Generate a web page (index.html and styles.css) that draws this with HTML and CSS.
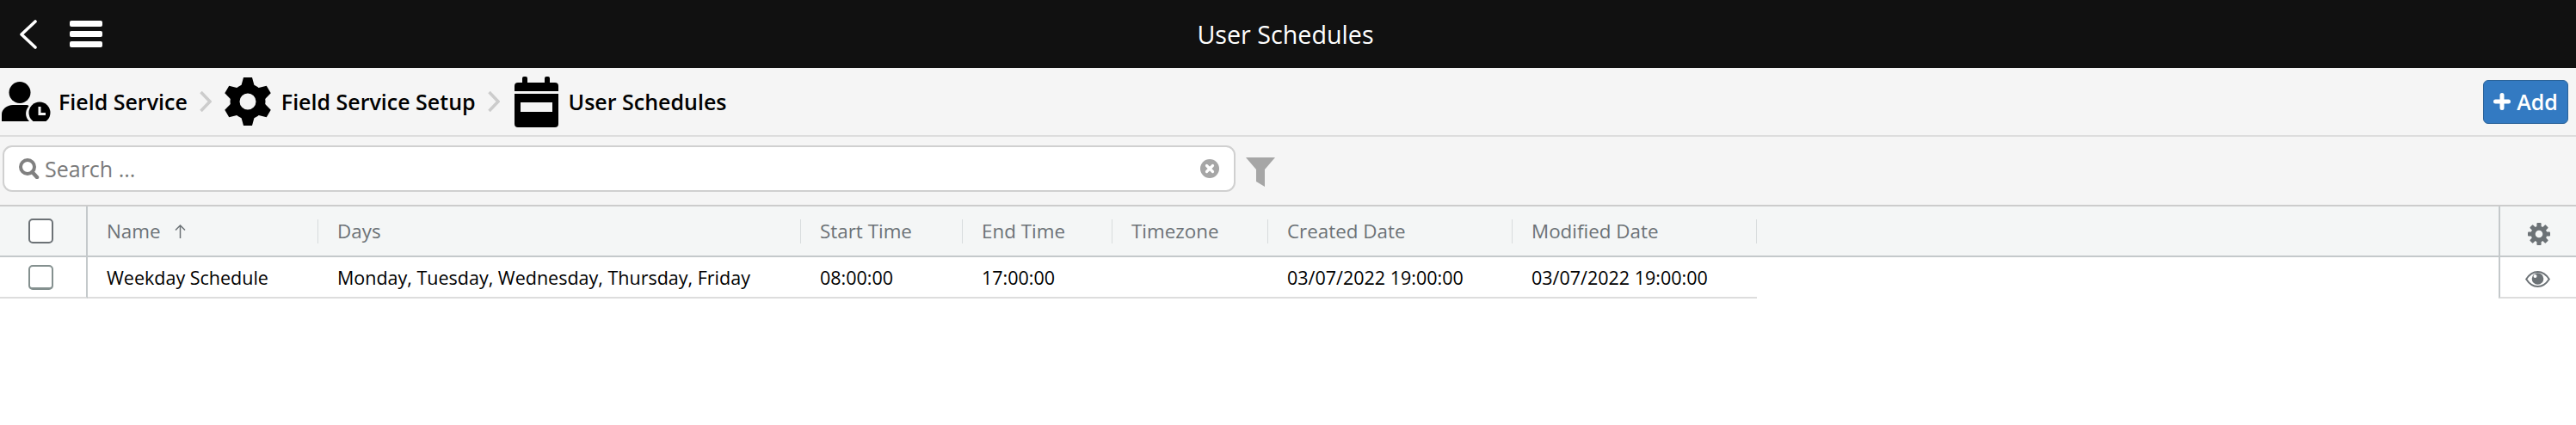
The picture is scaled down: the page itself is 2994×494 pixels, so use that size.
FILE: index.html
```html
<!DOCTYPE html>
<html lang="en">
<head>
    <meta charset="UTF-8">
    <title>User Schedules</title>
    <link rel="stylesheet" href="styles.css">
</head>
<body>
    <div class="topbar">
        <div class="topbar-left">
            <svg class="back-icon" viewBox="0 0 21 34"><path d="M19 2 L3 17 L19 32" fill="none" stroke="#fff" stroke-width="3.6" stroke-linecap="round" stroke-linejoin="round"/></svg>
            <div class="hamburger"><span></span><span></span><span></span></div>
        </div>
        <div class="topbar-title">User Schedules</div>
        <div></div>
    </div>

    <div class="breadcrumb-bar">
        <div class="breadcrumbs">
            <svg class="crumb-user" viewBox="0 0 57 46">
                <circle cx="21" cy="12.5" r="12.5"/>
                <path d="M0 46 V38 C0 32 6 27 13 27 H29 C31 27 32 28 31 29 C27 34 27 41 32 46 Z"/>
                <circle cx="44" cy="36" r="12.5"/>
                <path d="M44 29 V37.5 H51" fill="none" stroke="#f5f5f5" stroke-width="3"/>
            </svg>
            <span class="crumb-text crumb-first">Field Service</span>
            <svg class="crumb-sep" viewBox="0 0 14 24"><path d="M1.5 1 L12 12 L1.5 23" fill="none" stroke="#ccc" stroke-width="3.5"/></svg>
            <svg class="crumb-gear" viewBox="0 0 54 56">
                <g transform="translate(27 28)">
                    <circle r="15" fill="none" stroke="#000" stroke-width="11"/>
                    <path d="M-5 -28 H5 L8 -17 H-8 Z"/>
                    <path d="M-5 -28 H5 L8 -17 H-8 Z" transform="rotate(60)"/>
                    <path d="M-5 -28 H5 L8 -17 H-8 Z" transform="rotate(120)"/>
                    <path d="M-5 -28 H5 L8 -17 H-8 Z" transform="rotate(180)"/>
                    <path d="M-5 -28 H5 L8 -17 H-8 Z" transform="rotate(240)"/>
                    <path d="M-5 -28 H5 L8 -17 H-8 Z" transform="rotate(300)"/>
                </g>
            </svg>
            <span class="crumb-text">Field Service Setup</span>
            <svg class="crumb-sep" viewBox="0 0 14 24"><path d="M1.5 1 L12 12 L1.5 23" fill="none" stroke="#ccc" stroke-width="3.5"/></svg>
            <svg class="crumb-cal" viewBox="0 0 51 59">
                <rect x="9" y="0" width="6" height="12" rx="2"/>
                <rect x="35" y="0" width="6" height="12" rx="2"/>
                <path d="M0 17 V11 Q0 7 4 7 H47 Q51 7 51 11 V17 Z"/>
                <path fill-rule="evenodd" d="M0 20 H51 V55 Q51 59 47 59 H4 Q0 59 0 55 Z M7 30 V41 H44 V30 Z"/>
            </svg>
            <span class="crumb-text">User Schedules</span>
        </div>
        <button class="add-button">
            <svg class="add-icon" viewBox="0 0 20 20"><path d="M10 2.5 V17.5 M2.5 10 H17.5" stroke="#fff" stroke-width="5" stroke-linecap="round"/></svg>
            Add
        </button>
    </div>

    <div class="search-bar">
        <div class="search-box">
            <svg class="search-icon" viewBox="0 0 24 24"><circle cx="10" cy="10" r="8" fill="none" stroke="#808080" stroke-width="4"/><path d="M15.5 16 L21 22" stroke="#808080" stroke-width="4.5" stroke-linecap="round"/></svg>
            <span class="search-placeholder">Search ...</span>
            <svg class="clear-icon" viewBox="0 0 22 22"><circle cx="11" cy="11" r="11" fill="#a6a6a6"/><path d="M7.5 7.5 L14.5 14.5 M14.5 7.5 L7.5 14.5" stroke="#fff" stroke-width="3.2" stroke-linecap="round"/></svg>
        </div>
        <svg class="filter-icon" viewBox="0 0 34 34"><path d="M0 0 H34 L22 14 V34 L12 28 V14 Z" fill="#a6a6a6"/></svg>
    </div>

    <div class="grid-row grid-head">
        <div class="cell check-cell"><span class="checkbox"></span></div>
        <div class="cell">
            <span>Name</span>
            <svg class="sort-arrow" viewBox="0 0 13 16"><path d="M6.5 16 V1 M1 6.5 L6.5 1 L12 6.5" fill="none" stroke="#6c7276" stroke-width="1.5"/></svg>
        </div>
        <div class="cell">Days</div>
        <div class="cell">Start Time</div>
        <div class="cell">End Time</div>
        <div class="cell">Timezone</div>
        <div class="cell">Created Date</div>
        <div class="cell">Modified Date</div>
        <div class="filler"></div>
        <div class="action-cell">
            <svg class="settings-icon" viewBox="0 0 26 26">
                <g transform="translate(13 13)" fill="#6c7276">
                    <circle r="6.8" fill="none" stroke="#6c7276" stroke-width="5"/>
                    <rect x="-2.6" y="-13" width="5.2" height="6" rx="1"/>
                    <rect x="-2.6" y="-13" width="5.2" height="6" rx="1" transform="rotate(45)"/>
                    <rect x="-2.6" y="-13" width="5.2" height="6" rx="1" transform="rotate(90)"/>
                    <rect x="-2.6" y="-13" width="5.2" height="6" rx="1" transform="rotate(135)"/>
                    <rect x="-2.6" y="-13" width="5.2" height="6" rx="1" transform="rotate(180)"/>
                    <rect x="-2.6" y="-13" width="5.2" height="6" rx="1" transform="rotate(225)"/>
                    <rect x="-2.6" y="-13" width="5.2" height="6" rx="1" transform="rotate(270)"/>
                    <rect x="-2.6" y="-13" width="5.2" height="6" rx="1" transform="rotate(315)"/>
                </g>
            </svg>
        </div>
    </div>

    <div class="grid-row grid-data">
        <div class="cell check-cell"><span class="checkbox"></span></div>
        <div class="cell">Weekday Schedule</div>
        <div class="cell">Monday, Tuesday, Wednesday, Thursday, Friday</div>
        <div class="cell">08:00:00</div>
        <div class="cell">17:00:00</div>
        <div class="cell"></div>
        <div class="cell">03/07/2022 19:00:00</div>
        <div class="cell">03/07/2022 19:00:00</div>
        <div class="filler"></div>
        <div class="action-cell">
            <svg class="eye-icon" viewBox="0 0 29 19">
                <path d="M1.2 9.5 C5 3.5 10 1 14.5 1 C19 1 24 3.5 27.8 9.5 C24 15.5 19 18 14.5 18 C10 18 5 15.5 1.2 9.5 Z" fill="none" stroke="#6c7276" stroke-width="2"/>
                <circle cx="14.5" cy="9" r="6.8" fill="#6c7276"/>
                <circle cx="11.5" cy="6" r="2" fill="#fff"/>
            </svg>
        </div>
    </div>
</body>
</html>
```

FILE: styles.css
```css
body, html {
    margin: 0;
    background-color: #fff;
    font-family: 'Open Sans', 'Liberation Sans', sans-serif;
    color: #000;
}

.topbar {
    height: 79px;
    background-color: #111;
    display: grid;
    grid-template-columns: 1fr auto 1fr;
    align-items: center;
    padding-right: 6px;
}

.topbar-left {
    display: flex;
    align-items: center;
    padding-left: 22px;
    gap: 38px;
}

.back-icon {
    width: 21px;
    height: 34px;
}

.hamburger {
    display: flex;
    flex-direction: column;
    gap: 5px;
    width: 38px;
}

.hamburger span {
    height: 7px;
    background-color: #fff;
    border-radius: 2px;
}

.topbar-title {
    color: #fff;
    font-size: 28.7px;
}

.breadcrumb-bar {
    height: 78px;
    background-color: #f5f5f5;
    border-bottom: 2px solid #ddd;
    display: flex;
    justify-content: space-between;
    align-items: center;
}

.breadcrumbs {
    display: flex;
    align-items: center;
    padding-left: 2px;
}

.crumb-text {
    font-size: 25px;
    font-weight: 600;
    margin-left: 12px;
}

.crumb-first {
    margin-left: 9px;
}

.crumb-user {
    width: 57px;
    height: 46px;
}

.crumb-sep {
    width: 14px;
    height: 24px;
    margin: 0 15px 0 14px;
}

.crumb-gear {
    width: 54px;
    height: 56px;
}

.crumb-cal {
    width: 51px;
    height: 59px;
    margin-left: 2px;
}

.add-button {
    width: 99px;
    height: 51px;
    margin-right: 9px;
    background-color: #337ac2;
    border: 1px solid #2a6298;
    border-radius: 6px;
    color: #fff;
    font-family: inherit;
    font-size: 25px;
    font-weight: 600;
    padding: 0;
    display: flex;
    align-items: center;
    justify-content: center;
    gap: 7px;
}

.add-icon {
    width: 20px;
    height: 20px;
}

.search-bar {
    height: 81px;
    background-color: #f5f5f5;
    border-bottom: 2px solid #ccc;
    display: flex;
    align-items: flex-start;
    padding: 10px 0 0 3px;
    box-sizing: border-box;
}

.search-box {
    width: 1433px;
    height: 54px;
    box-sizing: border-box;
    background-color: #fff;
    border: 2px solid #d0d0d0;
    border-radius: 11px;
    display: flex;
    align-items: center;
    padding: 0 17px;
}

.search-icon {
    width: 24px;
    height: 24px;
}

.search-placeholder {
    flex: 1;
    font-size: 25px;
    color: #7a7a7a;
    margin-left: 6px;
}

.clear-icon {
    width: 22px;
    height: 22px;
}

.filter-icon {
    width: 34px;
    height: 34px;
    margin: 14px 0 0 12px;
}

.grid-row {
    display: grid;
    grid-template-columns: 102px 268px 561px 188px 174px 181px 284px 284px 1fr 90px;
    font-size: 21.5px;
    box-sizing: border-box;
}

.grid-head {
    height: 59px;
    background-color: #f4f6f6;
    color: #6c7276;
    border-bottom: 2px solid #c4c9cb;
    font-size: 22.4px;
}

.grid-data {
    height: 48px;
}

.cell {
    display: flex;
    align-items: center;
    padding-left: 22px;
    box-sizing: border-box;
}

.grid-head .cell {
    background: linear-gradient(#d8dcdd, #d8dcdd) right center / 1px 28px no-repeat;
}

.grid-data .cell {
    border-bottom: 2px solid #ddd;
}

.grid-row .check-cell {
    background: none;
    padding-left: 33px;
    border-right: 2px solid #c4c9cb;
}

.checkbox {
    display: block;
    width: 29px;
    height: 29px;
    box-sizing: border-box;
    background-color: #fff;
    border: 2px solid #6c7276;
    border-radius: 5px;
}

.grid-data .checkbox {
    border-color: #84908f;
    border-bottom-width: 3px;
}

.sort-arrow {
    width: 13px;
    height: 16px;
    margin-left: 16px;
}

.action-cell {
    display: flex;
    align-items: center;
    justify-content: center;
    border-left: 2px solid #c4c9cb;
}

.grid-data .action-cell {
    border-bottom: 2px solid #ddd;
}

.settings-icon {
    width: 26px;
    height: 26px;
    margin: 6px 0 0 2px;
}

.eye-icon {
    width: 29px;
    height: 19px;
    margin: 4px 2px 0 0;
}
```
